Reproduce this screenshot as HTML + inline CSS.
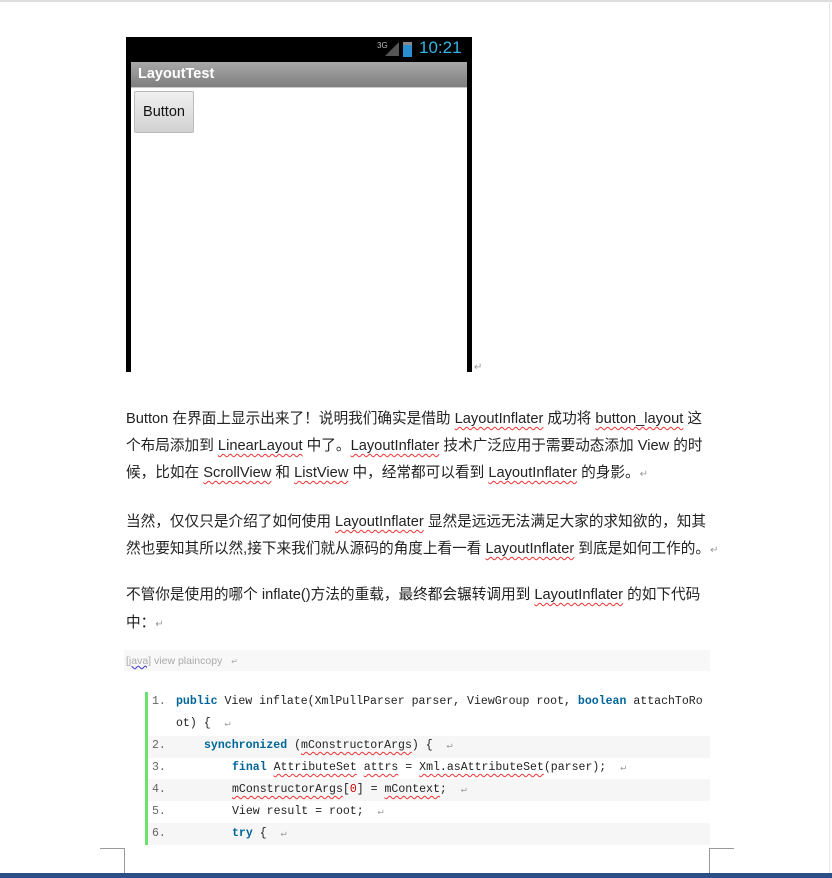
<!DOCTYPE html>
<html><head><meta charset="utf-8">
<style>
*{margin:0;padding:0;box-sizing:border-box}
body{width:832px;height:878px;background:#fff;position:relative;overflow:hidden;font-family:"Liberation Sans","Noto Sans CJK SC",sans-serif;color:#222}
.a{position:absolute;white-space:nowrap}
.t{font-size:14.65px;left:126px}
.u{text-decoration:underline wavy #e33;text-decoration-thickness:1px;text-underline-offset:3px}
.m{font-family:"Liberation Mono","DejaVu Sans Mono",monospace;font-size:11.55px;color:#222}
.k{color:#069;font-weight:bold}
.n{color:#666}
.ret{color:#999;font-size:10px}
.row{position:absolute;left:148px;width:562px;height:22px}
</style></head><body>
<div class="a" style="left:0;top:0;width:832px;height:2px;background:#ddd"></div>
<div class="a" style="left:829px;top:0;width:1px;height:878px;background:#e6e6e6"></div>

<div class="a" style="left:126px;top:37px;width:346px;height:335px;background:#fff;border-left:5px solid #000;border-right:5px solid #000">
  <div class="a" style="left:-5px;top:0;width:346px;height:25px;background:#000"></div>
  <div class="a" style="left:246px;top:4px;font-size:8px;color:#bbb">3G</div>
  <svg class="a" style="left:254px;top:5px" width="14" height="14"><polygon points="14,0 14,14 0,14" fill="#555"/></svg>
  <div class="a" style="left:272px;top:5px;width:9px;height:15px;background:#2a8fd0;border-top:3px solid #888"></div>
  <div class="a" style="left:288px;top:1px;font-size:17px;color:#33b5e5">10:21</div>
  <div class="a" style="left:0;top:25px;width:336px;height:26px;background:linear-gradient(#a8a8a8,#7e7e7e);border-bottom:1px solid #ccc"></div>
  <div class="a" style="left:7px;top:29px;font-size:14.5px;font-weight:bold;color:#fff">LayoutTest</div>
  <div class="a" style="left:3px;top:54px;width:60px;height:42px;background:linear-gradient(#f0f0f0,#d2d2d2);border:1px solid #bbb;border-radius:2px;font-size:14.5px;color:#111;text-align:center;line-height:40px">Button</div>
</div>
<div class="a ret" style="left:474px;top:362px">↵</div>

<div class="a t" style="top:407px">Button 在界面上显示出来了！说明我们确实是借助 <span class="u">LayoutInflater</span> 成功将 <span class="u">button_layout</span> 这</div>
<div class="a t" style="top:434px">个布局添加到 <span class="u">LinearLayout</span> 中了。<span class="u">LayoutInflater</span> 技术广泛应用于需要动态添加 View 的时</div>
<div class="a t" style="top:461px">候，比如在 <span class="u">ScrollView</span> 和 <span class="u">ListView</span> 中，经常都可以看到 <span class="u">LayoutInflater</span> 的身影。<span class="ret">↵</span></div>

<div class="a t" style="top:510px">当然，仅仅只是介绍了如何使用 <span class="u">LayoutInflater</span> 显然是远远无法满足大家的求知欲的，知其</div>
<div class="a t" style="top:537px">然也要知其所以然,接下来我们就从源码的角度上看一看 <span class="u">LayoutInflater</span> 到底是如何工作的。<span class="ret">↵</span></div>

<div class="a t" style="top:583px">不管你是使用的哪个 inflate()方法的重载，最终都会辗转调用到 <span class="u">LayoutInflater</span> 的如下代码</div>
<div class="a t" style="top:611px">中：<span class="ret">↵</span></div>

<div class="a" style="left:124px;top:650px;width:586px;height:21px;background:#f8f8f8"></div>
<div class="a" style="left:126px;top:655px;font-size:10.5px;color:#aaa"><span style="text-decoration:underline wavy #44c">[java]</span> view plaincopy &nbsp; <span style="font-size:8px">↵</span></div>

<div class="a" style="left:145px;top:692px;width:3px;height:153px;background:#6ce26c"></div>
<div class="row" style="top:736px;background:#f6f6f6"></div>
<div class="row" style="top:779px;background:#f6f6f6"></div>
<div class="row" style="top:823px;background:#f6f6f6"></div>

<div class="a m" style="left:152px;top:695px"><span class="n">1.</span></div>
<div class="a m" style="left:176px;top:695px"><span class="k">public</span> View inflate(XmlPullParser parser, ViewGroup root, <span class="k">boolean</span> attachToRo</div>
<div class="a m" style="left:176px;top:717px">ot) { &nbsp;<span class="ret">↵</span></div>
<div class="a m" style="left:152px;top:739px"><span class="n">2.</span></div>
<div class="a m" style="left:204px;top:739px"><span class="k">synchronized</span> (<span class="u">mConstructorArgs</span>) { &nbsp;<span class="ret">↵</span></div>
<div class="a m" style="left:152px;top:761px"><span class="n">3.</span></div>
<div class="a m" style="left:232px;top:761px"><span class="k">final</span> <span class="u">AttributeSet</span> <span class="u">attrs</span> = <span class="u">Xml.asAttributeSet</span>(parser); &nbsp;<span class="ret">↵</span></div>
<div class="a m" style="left:152px;top:783px"><span class="n">4.</span></div>
<div class="a m" style="left:232px;top:783px"><span class="u">mConstructorArgs</span>[<span style="color:#c00">0</span>] = <span class="u">mContext</span>; &nbsp;<span class="ret">↵</span></div>
<div class="a m" style="left:152px;top:805px"><span class="n">5.</span></div>
<div class="a m" style="left:232px;top:805px">View result = root; &nbsp;<span class="ret">↵</span></div>
<div class="a m" style="left:152px;top:827px"><span class="n">6.</span></div>
<div class="a m" style="left:232px;top:827px"><span class="k">try</span> { &nbsp;<span class="ret">↵</span></div>

<div class="a" style="left:100px;top:848px;width:25px;height:1px;background:#999"></div>
<div class="a" style="left:124px;top:848px;width:1px;height:25px;background:#999"></div>
<div class="a" style="left:709px;top:848px;width:25px;height:1px;background:#999"></div>
<div class="a" style="left:709px;top:848px;width:1px;height:25px;background:#999"></div>
<div class="a" style="left:0;top:873px;width:832px;height:5px;background:#2b4f86"></div>
</body></html>
